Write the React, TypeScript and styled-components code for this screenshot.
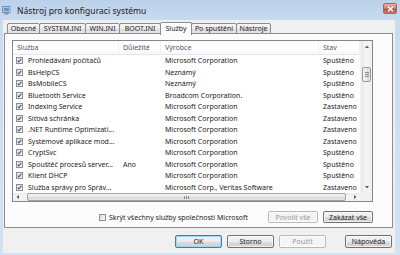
import React from "react";
import styled, { createGlobalStyle } from "styled-components";

const Global = createGlobalStyle`
  html, body { margin: 0; padding: 0; background: #ffffff; }
  body { font-family: "Noto Sans", "Open Sans", sans-serif; -webkit-font-smoothing: antialiased; }
  * { box-sizing: border-box; }
`;

const Frame = styled.div`
  width: 400px;
  height: 255px;
  display: flex;
  flex-direction: column;
  background: linear-gradient(180deg, #bcd2ea 0%, #cadcf0 10%, #d3e3f4 100%);
  padding: 0 5px 2px 3px;
`;

const TitleBar = styled.div`
  height: 20px;
  display: flex;
  align-items: center;
  margin-left: -1px;
  gap: 6px;
  font-size: 8.5px;
  color: #1a1a1a;
`;

const TitleText = styled.span`
  flex: 1;
  letter-spacing: 0.05px;
`;

const CloseBtn = styled.div`
  width: 14px;
  height: 11px;
  margin-top: -3px;
  margin-right: -2px;
  border-radius: 2px;
  border: 1px solid #9a6a64;
  background: linear-gradient(180deg, #e6b2a9 0%, #d48274 45%, #c4503f 55%, #d27462 100%);
  display: flex;
  align-items: center;
  justify-content: center;
`;

const Body = styled.div`
  flex: 1;
  background: #f0f0f0;
  display: flex;
  flex-direction: column;
  padding: 2px 2px 0 1px;
`;

const TabStrip = styled.div`
  display: flex;
  align-items: flex-end;
  height: 12px;
  padding-left: 3px;
  position: relative;
  z-index: 1;
`;

const Tab = styled.div<{ $active?: boolean; $w: number }>`
  font-size: 7px;
  line-height: 1;
  color: #222;
  display: flex;
  align-items: center;
  justify-content: center;
  flex: none;
  width: ${(p) => p.$w}px;
  height: ${(p) => (p.$active ? 13 : 11)}px;
  margin: ${(p) => (p.$active ? "0 0 -1px -1px" : "0 0 0 -1px")};
  border: 1px solid #898c95;
  border-bottom: ${(p) => (p.$active ? "none" : "1px solid #898c95")};
  border-radius: 2px 2px 0 0;
  background: ${(p) =>
    p.$active
      ? "#fcfcfc"
      : "linear-gradient(180deg, #f7f7f7 0%, #ececec 50%, #dedede 51%, #e4e4e4 100%)"};
  position: relative;
  z-index: ${(p) => (p.$active ? 2 : 1)};
  padding-bottom: ${(p) => (p.$active ? 2 : 0)}px;
  &:first-child { margin-left: 0; }
`;

const Panel = styled.div`
  height: 195px;
  margin-top: -1px;
  border: 1px solid #898c95;
  background: #fcfcfc;
  display: flex;
  flex-direction: column;
  padding: 6px 19px 0 7px;
`;

const List = styled.div`
  height: 162px;
  border: 1px solid #828790;
  background: #ffffff;
  display: grid;
  grid-template-columns: 1fr 12px;
  grid-template-rows: 1fr 8px;
`;

const Content = styled.div`
  display: flex;
  flex-direction: column;
  overflow: hidden;
`;

const cols = "106px 42px 158px 1fr";

const Header = styled.div`
  height: 14px;
  display: grid;
  grid-template-columns: ${cols};
  background: linear-gradient(180deg, #ffffff 0%, #ffffff 60%, #f6f7f8 100%);
  border-bottom: 1px solid #e3e7ec;
  font-size: 7px;
  color: #4c5a6a;
  align-items: center;
`;

const HeadCell = styled.div`
  padding-left: 4px;
  height: 100%;
  display: flex;
  align-items: center;
  border-right: 1px solid #eef0f3;
`;

const Row = styled.div`
  height: 11.5px;
  display: grid;
  grid-template-columns: ${cols};
  align-items: center;
  font-size: 7px;
  color: #1c1c1c;
  white-space: nowrap;
`;

const Cell = styled.div`
  padding-left: 4px;
  overflow: hidden;
`;

const NameCell = styled.div`
  display: flex;
  align-items: center;
  padding-left: 3px;
  gap: 5px;
  overflow: hidden;
`;

const VScroll = styled.div`
  display: flex;
  flex-direction: column;
  background: linear-gradient(90deg, #e8e8e8, #f4f4f4 40%, #f0f0f0);
  border-left: 1px solid #f3f3f3;
`;

const HScroll = styled.div`
  display: flex;
  align-items: stretch;
  background: linear-gradient(180deg, #e8e8e8, #f4f4f4 40%, #f0f0f0);
`;

const Corner = styled.div`
  background: #f0f0f0;
`;

const ArrowBox = styled.div<{ $w?: number; $h?: number }>`
  width: ${(p) => p.$w ?? 12}px;
  height: ${(p) => p.$h ?? 12}px;
  flex: none;
  display: flex;
  align-items: center;
  justify-content: center;
`;

const VTrack = styled.div`
  flex: 1;
  padding-top: 14px;
  display: flex;
  justify-content: center;
`;

const VThumb = styled.div`
  width: 9px;
  height: 15px;
  border: 1px solid #9b9b9b;
  border-radius: 2px;
  background: linear-gradient(90deg, #f3f3f3 0%, #e9e9e9 50%, #d8d8d8 51%, #e4e4e4 100%);
  display: flex;
  flex-direction: column;
  align-items: center;
  justify-content: center;
  gap: 1px;
`;

const HTrack = styled.div`
  flex: 1;
  display: flex;
  padding: 0 4px 0 4px;
`;

const HThumb = styled.div`
  flex: 1;
  height: 8px;
  border: 1px solid #a3a3a3;
  border-radius: 2px;
  background: linear-gradient(180deg, #f3f3f3 0%, #e9e9e9 50%, #d8d8d8 51%, #e4e4e4 100%);
  display: flex;
  align-items: center;
  justify-content: center;
  gap: 1px;
`;

const GripV = styled.div`
  width: 4px;
  height: 1px;
  background: #8a8a8a;
`;

const GripH = styled.div`
  width: 1px;
  height: 3px;
  background: #8a8a8a;
`;

const OptionsRow = styled.div`
  display: flex;
  align-items: center;
  justify-content: flex-end;
  margin-top: 9px;
  gap: 5px;
`;

const HideLabel = styled.label`
  display: flex;
  align-items: center;
  gap: 3px;
  font-size: 7px;
  color: #1c1c1c;
  margin-right: 15px;
`;

const Button = styled.div<{ $disabled?: boolean; $default?: boolean; $w?: number; $h?: number }>`
  width: ${(p) => p.$w ?? 47}px;
  height: ${(p) => p.$h ?? 13}px;
  display: flex;
  align-items: center;
  justify-content: center;
  font-size: 7px;
  border-radius: 2px;
  color: ${(p) => (p.$disabled ? "#9a9a9a" : "#1c1c1c")};
  border: 1px solid ${(p) => (p.$disabled ? "#b7babc" : p.$default ? "#3c7fb1" : "#707070")};
  background: ${(p) =>
    p.$disabled
      ? "#f4f4f4"
      : "linear-gradient(180deg, #f2f2f2 0%, #ebebeb 50%, #dddddd 51%, #cfcfcf 100%)"};
  box-shadow: ${(p) => (p.$default ? "inset 0 0 0 1px #9ed7f5" : "inset 0 0 0 1px rgba(255,255,255,0.7)")};
`;

const ButtonRow = styled.div`
  display: flex;
  justify-content: flex-end;
  align-items: center;
  margin-top: 7px;
  padding-right: 1px;
  gap: 5px;
`;

const HelpGap = styled.div`
  width: 9px;
`;

const Check = ({ checked = true }: { checked?: boolean }) => (
  <svg width="7" height="7" viewBox="0 0 7 7" style={{ flex: "none", display: "block" }}>
    <defs>
      <linearGradient id="cbg" x1="0" y1="0" x2="1" y2="1">
        <stop offset="0" stopColor="#dcdcdc" />
        <stop offset="1" stopColor="#fbfbfb" />
      </linearGradient>
    </defs>
    <rect x="0.5" y="0.5" width="6" height="6" fill="url(#cbg)" stroke="#8f8f8f" />
    {checked && (
      <path d="M1.7 3.6 L2.9 4.9 L5.3 1.8" fill="none" stroke="#3d5a93" strokeWidth="1.1" />
    )}
  </svg>
);

const Tri = ({ dir }: { dir: "up" | "down" | "left" | "right" }) => {
  const d = {
    up: "M1 4 L3 1.5 L5 4 Z",
    down: "M1 2 L3 4.5 L5 2 Z",
    left: "M4 1 L1.5 3 L4 5 Z",
    right: "M2 1 L4.5 3 L2 5 Z",
  }[dir];
  return (
    <svg width="6" height="6" viewBox="0 0 6 6">
      <path d={d} fill="#5c5c5c" />
    </svg>
  );
};

const AppIcon = () => (
  <svg width="9" height="9" viewBox="0 0 9 9" style={{ flex: "none" }}>
    <rect x="0.5" y="0.5" width="7.5" height="6" fill="#e8eef6" stroke="#6b7f99" strokeWidth="0.8" />
    <rect x="1.5" y="1.5" width="5.5" height="4" fill="#5f95d3" />
    <rect x="2.5" y="7" width="4" height="1.5" fill="#7d8ea6" />
  </svg>
);

type Svc = { name: string; imp?: string; vendor: string; state: string };

const services: Svc[] = [
  { name: "Prohledávání počítačů", vendor: "Microsoft Corporation", state: "Spuštěno" },
  { name: "BsHelpCS", vendor: "Neznámý", state: "Spuštěno" },
  { name: "BsMobileCS", vendor: "Neznámý", state: "Spuštěno" },
  { name: "Bluetooth Service", vendor: "Broadcom Corporation.", state: "Spuštěno" },
  { name: "Indexing Service", vendor: "Microsoft Corporation", state: "Zastaveno" },
  { name: "Síťová schránka", vendor: "Microsoft Corporation", state: "Zastaveno" },
  { name: ".NET Runtime Optimizati...", vendor: "Microsoft Corporation", state: "Zastaveno" },
  { name: "Systémové aplikace mod...", vendor: "Microsoft Corporation", state: "Zastaveno" },
  { name: "CryptSvc", vendor: "Microsoft Corporation", state: "Spuštěno" },
  { name: "Spouštěč procesů server...", imp: "Ano", vendor: "Microsoft Corporation", state: "Spuštěno" },
  { name: "Klient DHCP", vendor: "Microsoft Corporation", state: "Spuštěno" },
  { name: "Služba správy pro Správ...", vendor: "Microsoft Corp., Veritas Software", state: "Zastaveno" },
];

const tabs: { label: string; w: number }[] = [
  { label: "Obecné", w: 33 },
  { label: "SYSTEM.INI", w: 47 },
  { label: "WIN.INI", w: 35 },
  { label: "BOOT.INI", w: 42 },
  { label: "Služby", w: 32 },
  { label: "Po spuštění", w: 46 },
  { label: "Nástroje", w: 35 },
];

export default function App() {
  return (
    <>
      <Global />
      <Frame>
        <TitleBar>
          <AppIcon />
          <TitleText>Nástroj pro konfiguraci systému</TitleText>
          <CloseBtn>
            <svg width="7" height="6" viewBox="0 0 7 6">
              <path d="M1 0.8 L6 5.2 M6 0.8 L1 5.2" stroke="#ffffff" strokeWidth="1.5" />
            </svg>
          </CloseBtn>
        </TitleBar>
        <Body>
          <TabStrip>
            {tabs.map((t) => (
              <Tab key={t.label} $w={t.w} $active={t.label === "Služby"}>
                {t.label}
              </Tab>
            ))}
          </TabStrip>
          <Panel>
            <List>
              <Content>
                <Header>
                  <HeadCell>Služba</HeadCell>
                  <HeadCell>Důležité</HeadCell>
                  <HeadCell>Výrobce</HeadCell>
                  <HeadCell>Stav</HeadCell>
                </Header>
                {services.map((s) => (
                  <Row key={s.name}>
                    <NameCell>
                      <Check />
                      <span>{s.name}</span>
                    </NameCell>
                    <Cell>{s.imp ?? ""}</Cell>
                    <Cell>{s.vendor}</Cell>
                    <Cell>{s.state}</Cell>
                  </Row>
                ))}
              </Content>
              <VScroll>
                <ArrowBox>
                  <Tri dir="up" />
                </ArrowBox>
                <VTrack>
                  <VThumb>
                    <GripV />
                    <GripV />
                    <GripV />
                  </VThumb>
                </VTrack>
                <ArrowBox>
                  <Tri dir="down" />
                </ArrowBox>
              </VScroll>
              <HScroll>
                <ArrowBox $w={10} $h={8}>
                  <Tri dir="left" />
                </ArrowBox>
                <HTrack>
                  <HThumb>
                    <GripH />
                    <GripH />
                    <GripH />
                  </HThumb>
                </HTrack>
                <ArrowBox $w={10} $h={8}>
                  <Tri dir="right" />
                </ArrowBox>
              </HScroll>
              <Corner />
            </List>
            <OptionsRow>
              <HideLabel>
                <Check checked={false} />
                <span>Skrýt všechny služby společnosti Microsoft</span>
              </HideLabel>
              <Button $disabled $w={50} $h={12}>
                Povolit vše
              </Button>
              <Button $w={50} $h={12}>
                Zakázat vše
              </Button>
            </OptionsRow>
          </Panel>
          <ButtonRow>
            <Button $default>OK</Button>
            <Button>Storno</Button>
            <Button $disabled>Použít</Button>
            <HelpGap />
            <Button>Nápověda</Button>
          </ButtonRow>
        </Body>
      </Frame>
    </>
  );
}
